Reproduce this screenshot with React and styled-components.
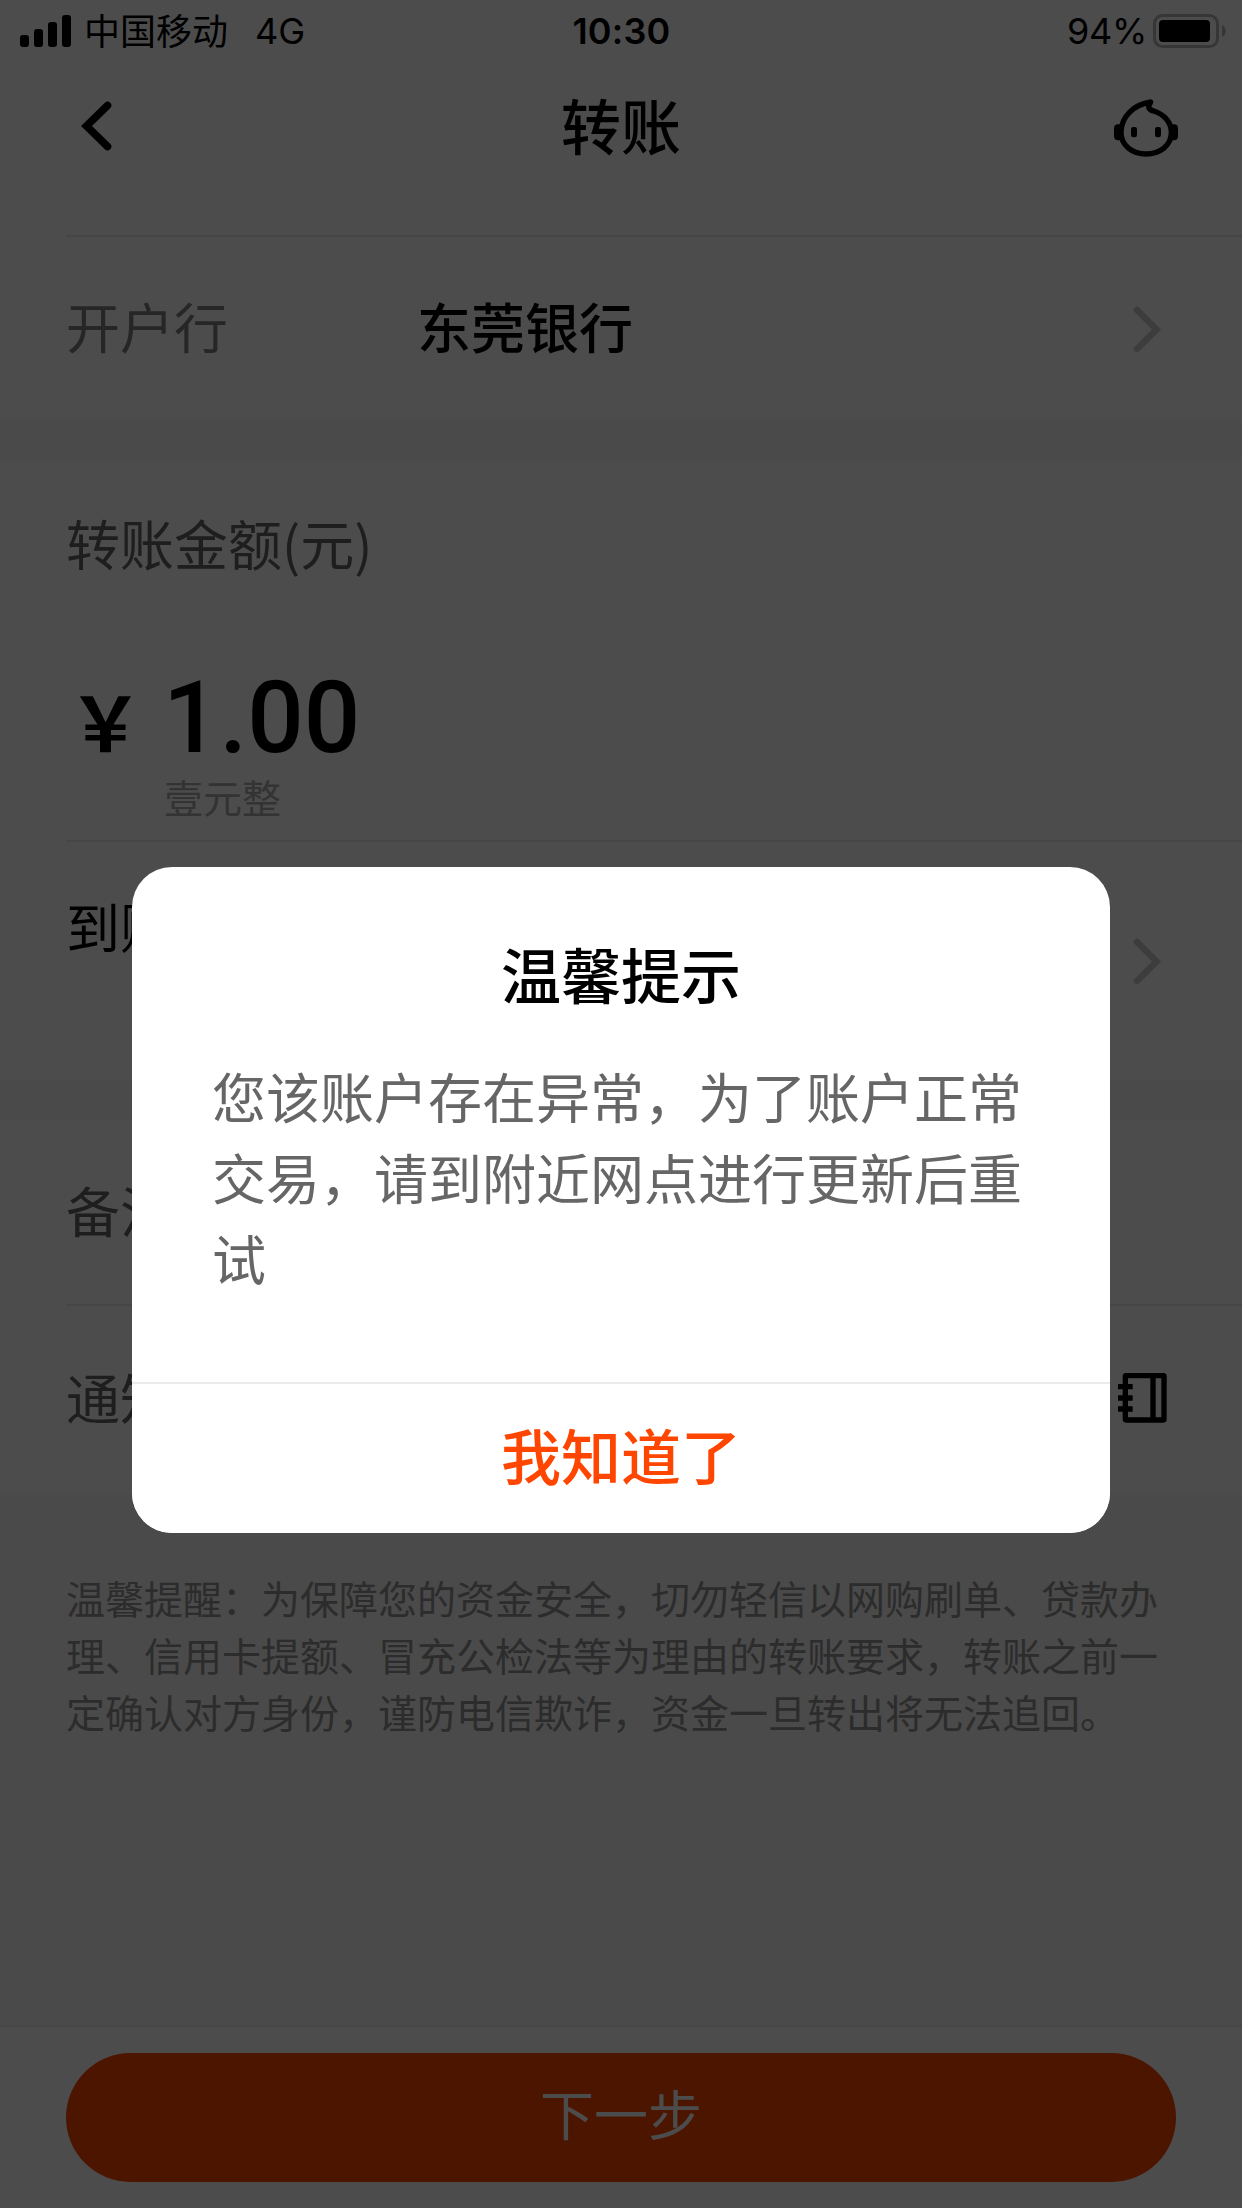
import React, { useState } from "react";
import styled, { createGlobalStyle } from "styled-components";

const GlobalStyle = createGlobalStyle`
  * {
    box-sizing: border-box;
  }
  body {
    margin: 0;
    font-family: "Noto Sans CJK SC", sans-serif;
  }
  svg {
    display: block;
  }
`;

const Page = styled.div`
  position: relative;
  display: flex;
  flex-direction: column;
  width: 1242px;
  height: 2208px;
  overflow: hidden;
  background-color: #f8f8f8;
  color: #000;
`;

const StatusBar = styled.div`
  display: grid;
  grid-template-columns: 1fr auto 1fr;
  align-items: center;
  height: 60px;
  padding: 0 16px 0 20px;
  background-color: #fff;
  font-family: Inter, "Noto Sans CJK SC", sans-serif;
  font-size: 36px;
  line-height: 60px;
`;

const StatusGroup = styled.div`
  display: flex;
  align-items: center;
  justify-content: ${(props) => (props.$end ? "flex-end" : "flex-start")};
`;

const Carrier = styled.span`
  margin-left: 13px;
  padding-top: 2px;
`;

const Network = styled.span`
  margin-left: 27px;
`;

const Clock = styled.span`
  padding-right: 3px;
  font-weight: 600;
  letter-spacing: 0.2px;
`;

const Percent = styled.span`
  margin-right: 6px;
  letter-spacing: -0.3px;
`;

const Header = styled.header`
  display: grid;
  grid-template-columns: 1fr auto 1fr;
  align-items: center;
  height: 175px;
  padding: 0 61px 43px;
  background-color: #fff;
`;

const HeaderTitle = styled.h1`
  margin: 0;
  padding-bottom: 5px;
  font-size: 60px;
  font-weight: 500;
  line-height: 80px;
`;

const HeaderAction = styled.div`
  justify-self: ${(props) => (props.$end ? "end" : "start")};
  padding: ${(props) => (props.$end ? "4px 0 0" : "0 0 0 17px")};
`;

const Line = styled.hr`
  flex-shrink: 0;
  width: ${(props) => (props.$full ? "100%" : "1176px")};
  height: 2px;
  margin: 0 0 0 auto;
  border: none;
  background-color: #ececec;
`;

const Group = styled.section`
  display: flex;
  flex-direction: column;
  margin-bottom: 40px;
  background-color: #fff;
`;

const Row = styled.div`
  display: flex;
  align-items: center;
  height: ${(props) => props.$height}px;
  padding: 0 ${(props) => props.$right || 81}px 0 66px;
`;

const RowLabel = styled.span`
  width: 351px;
  padding-bottom: 5px;
  color: ${(props) => props.$color || "#666"};
  font-size: 54px;
  line-height: 80px;
`;

const RowValue = styled.span`
  padding-bottom: 5px;
  font-size: 54px;
  font-weight: 500;
  line-height: 80px;
`;

const RowIcon = styled.div`
  margin-left: auto;
  padding-bottom: ${(props) => props.$lift || 0}px;
`;

const ArrivalLabel = styled.span`
  align-self: flex-start;
  margin-top: 44px;
  font-size: 54px;
  line-height: 80px;
`;

const AmountBox = styled.div`
  display: flex;
  flex-direction: column;
  height: 380px;
  padding: 43px 66px 0;
`;

const AmountLabel = styled.span`
  color: #666;
  font-size: 54px;
  line-height: 80px;
`;

const Amount = styled.div`
  display: flex;
  align-items: baseline;
  height: 92px;
  margin-top: 89px;
`;

const Currency = styled.span`
  width: 97px;
  padding-left: 2px;
  font-size: 75px;
  font-weight: 700;
  line-height: 88px;
`;

const Figure = styled.span`
  font-family: Roboto, sans-serif;
  font-size: 99.5px;
  font-weight: 500;
  line-height: 92px;
`;

const AmountWords = styled.span`
  margin-top: 4px;
  padding-left: 98px;
  color: #acacac;
  font-size: 39px;
  line-height: 57px;
`;

const Tips = styled.p`
  flex: 1;
  margin: 0;
  padding: 36px 66px 0;
  color: #949494;
  font-size: 39px;
  line-height: 57px;
`;

const Footer = styled.footer`
  height: 181px;
  padding: 26px 66px 0;
  background-color: #fff;
`;

const NextBtn = styled.button`
  display: block;
  width: 100%;
  height: 129px;
  padding: 0 0 11px;
  border: none;
  border-radius: 65px;
  background-color: #ff4600;
  color: #fff;
  font-family: inherit;
  font-size: 54px;
`;

const Overlay = styled.div`
  position: absolute;
  inset: 0;
  display: flex;
  flex-direction: column;
  align-items: center;
  padding-top: 867px;
  background-color: rgba(0, 0, 0, 0.7);
`;

const Dialog = styled.div`
  display: flex;
  flex-direction: column;
  width: 978px;
  height: 665.5px;
  border-radius: 40px;
  background-color: #fff;
  overflow: hidden;
`;

const DialogTitle = styled.h2`
  margin: 66px 0 0;
  font-size: 60px;
  font-weight: 500;
  line-height: 80px;
  text-align: center;
`;

const DialogText = styled.p`
  flex: 1;
  margin: 0;
  padding: 42px 82px 0 80px;
  color: #666;
  font-size: 54px;
  line-height: 81px;
`;

const DialogBtn = styled.button`
  height: 151px;
  padding: 0 0 10px;
  border: none;
  border-top: 2px solid #ebebeb;
  background-color: #fff;
  color: #ff4600;
  font-family: inherit;
  font-size: 60px;
  font-weight: 500;
`;

const SignalIcon = () => (
  <svg width="51" height="32" viewBox="0 0 51 32">
    <rect x="0" y="20" width="9" height="12" rx="3" />
    <rect x="14" y="14" width="9" height="18" rx="3" />
    <rect x="28" y="7" width="9" height="25" rx="3" />
    <rect x="42" y="0" width="9" height="32" rx="3" />
  </svg>
);

const BatteryIcon = () => (
  <svg width="73" height="34" viewBox="0 0 73 34">
    <rect x="1.5" y="1.5" width="63" height="31" rx="8" fill="none" stroke="#b5b5b5" strokeWidth="3" />
    <rect x="6" y="6" width="51" height="22" rx="4" />
    <path d="M69 11c5 2 5 10 0 12z" fill="#b5b5b5" />
  </svg>
);

const BackIcon = () => (
  <svg width="36" height="50" viewBox="0 0 36 50">
    <path d="M29.5 4.5L8.5 25l21 20.5" fill="none" stroke="#000" strokeWidth="7.6" strokeLinecap="round" />
  </svg>
);

const ArrowIcon = () => (
  <svg width="28" height="46" viewBox="0 0 28 46">
    <path d="M4 4L23.5 23.5 4 43" fill="none" stroke="#cbcbcb" strokeWidth="6.6" strokeLinecap="round" />
  </svg>
);

const ServiceIcon = () => (
  <svg width="70" height="62" viewBox="0 0 210 186">
    <path
      d="M119 15C70 22 30 58 30 106C30 146 64 171 105 171C147 171 181 146 181 106C181 75 158 52 130 43C117 39 111 34 114 26C115 21 118 19 119 15Z"
      fill="none"
      stroke="#000"
      strokeWidth="16"
      strokeLinejoin="round"
    />
    <path d="M30 82H21Q9 82 9 94V117Q9 130 21 130H30Z" />
    <path d="M180 82H189Q201 82 201 94V117Q201 130 189 130H180Z" />
    <rect x="60" y="90" width="18" height="31" rx="7" />
    <rect x="132" y="90" width="18" height="31" rx="7" />
  </svg>
);

const ContactsIcon = () => (
  <svg width="50.7" height="52" viewBox="0 0 152 156" fill="none" stroke="#000" strokeWidth="16">
    <rect x="25" y="11" width="116" height="133" rx="2" />
    <path d="M108 11V144M3 44H47M3 78H47M3 111H47" />
  </svg>
);

const App = () => {
  const [isOpen, setIsOpen] = useState(true);

  return (
    <Page>
      <GlobalStyle />
      <StatusBar>
        <StatusGroup>
          <SignalIcon />
          <Carrier>中国移动</Carrier>
          <Network>4G</Network>
        </StatusGroup>
        <Clock>10:30</Clock>
        <StatusGroup $end>
          <Percent>94%</Percent>
          <BatteryIcon />
        </StatusGroup>
      </StatusBar>
      <Header>
        <HeaderAction>
          <BackIcon />
        </HeaderAction>
        <HeaderTitle>转账</HeaderTitle>
        <HeaderAction $end>
          <ServiceIcon />
        </HeaderAction>
      </Header>

      <Group>
        <Line />
        <Row $height={183}>
          <RowLabel $color="#808080">开户行</RowLabel>
          <RowValue>东莞银行</RowValue>
          <RowIcon>
            <ArrowIcon />
          </RowIcon>
        </Row>
      </Group>

      <Group>
        <AmountBox>
          <AmountLabel>转账金额(元)</AmountLabel>
          <Amount>
            <Currency>￥</Currency>
            <Figure>1.00</Figure>
          </Amount>
          <AmountWords>壹元整</AmountWords>
        </AmountBox>
        <Line />
        <Row $height={238}>
          <ArrivalLabel>到账</ArrivalLabel>
          <RowIcon>
            <ArrowIcon />
          </RowIcon>
        </Row>
      </Group>

      <Group>
        <Row $height={184}>
          <RowLabel>备注</RowLabel>
        </Row>
        <Line />
        <Row $height={187} $right={74}>
          <RowLabel>通知</RowLabel>
          <RowIcon $lift={4}>
            <ContactsIcon />
          </RowIcon>
        </Row>
      </Group>

      <Tips>
        温馨提醒：为保障您的资金安全，切勿轻信以网购刷单、贷款办理、信用卡提额、冒充公检法等为理由的转账要求，转账之前一定确认对方身份，谨防电信欺诈，资金一旦转出将无法追回。
      </Tips>

      <Line $full />
      <Footer>
        <NextBtn>下一步</NextBtn>
      </Footer>

      {isOpen && (
        <Overlay>
          <Dialog>
            <DialogTitle>温馨提示</DialogTitle>
            <DialogText>您该账户存在异常，为了账户正常交易，请到附近网点进行更新后重试</DialogText>
            <DialogBtn onClick={() => setIsOpen(false)}>我知道了</DialogBtn>
          </Dialog>
        </Overlay>
      )}
    </Page>
  );
};

export default App;
